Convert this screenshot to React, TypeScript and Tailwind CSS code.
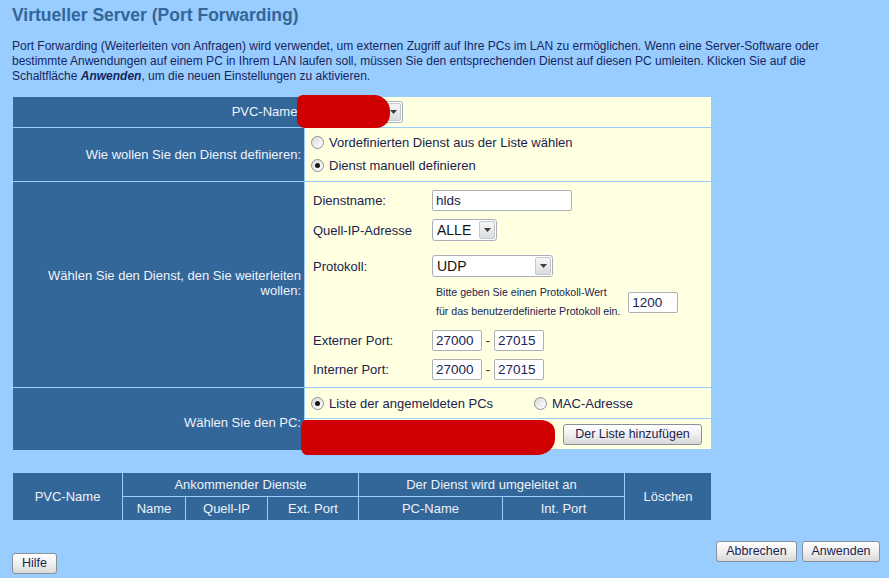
import React from "react";

const font = { fontFamily: '"Liberation Sans", Arial, sans-serif' };

function Radio({ checked }: { checked?: boolean }) {
  return (
    <span className="inline-flex h-[13px] w-[13px] shrink-0 items-center justify-center rounded-full border border-[#8e8f8f] bg-gradient-to-br from-[#dcdcdc] to-white">
      {checked && <span className="h-[5px] w-[5px] rounded-full bg-[#1a1a1a]" />}
    </span>
  );
}

function Select({ value, width }: { value: string; width: string }) {
  return (
    <div className={`flex h-[22px] items-stretch rounded-[3px] border border-[#a9afb8] bg-white ${width}`}>
      <span className="flex flex-1 items-center pl-[4px] text-[14px] text-[#111]">{value}</span>
      <span className="m-px flex w-[16px] items-center justify-center rounded-[2px] border border-[#c4c8cc] bg-gradient-to-b from-[#f6f6f6] to-[#d9dcdf]">
        <svg width="7" height="4" viewBox="0 0 7 4">
          <path d="M0 0h7L3.5 4z" fill="#3b3b3b" />
        </svg>
      </span>
    </div>
  );
}

function Input({ value, width }: { value: string; width: string }) {
  return (
    <div className={`flex h-[21px] items-center rounded-[2px] border border-[#abb0b6] bg-white pl-[3px] text-[13.5px] text-[#1a2450] ${width}`}>
      {value}
    </div>
  );
}

function Button({ children, width }: { children: React.ReactNode; width: string }) {
  return (
    <button className={`flex h-[21px] items-center justify-center rounded-[3px] border border-[#8a9099] bg-gradient-to-b from-white via-[#f0f0f0] to-[#d8d8d8] text-[12.5px] text-[#1a2450] ${width}`}>
      {children}
    </button>
  );
}

export default function App() {
  const left = "flex items-center justify-end bg-[#336699] pr-[3px] text-[13px] text-[#eef3fa]";
  const right = "bg-[#ffffe1] text-[13px] leading-[15px] text-[#1a2450]";
  const head = "flex items-center justify-center bg-[#336699] text-[13px] text-[#eef3fa]";

  return (
    <div style={font} className="min-h-[578px] w-[889px] bg-[#99ccff] px-[12px] pt-[4px]">
      <h1 className="text-[17.5px] font-bold leading-[22px] text-[#336699]">Virtueller Server (Port Forwarding)</h1>

      <p className="mt-[13px] whitespace-nowrap text-[12px] leading-[15px] text-[#15265e]">
        Port Forwarding (Weiterleiten von Anfragen) wird verwendet, um externen Zugriff auf Ihre PCs im LAN zu ermöglichen. Wenn eine Server-Software oder
        <br />
        bestimmte Anwendungen auf einem PC in Ihrem LAN laufen soll, müssen Sie den entsprechenden Dienst auf diesen PC umleiten. Klicken Sie auf die
        <br />
        Schaltfläche <b><i>Anwenden</i></b>, um die neuen Einstellungen zu aktivieren.
      </p>

      <div className="relative ml-px mt-[13px] grid w-[698px] grid-cols-[291px_406px] grid-rows-[30px_53px_205px_62px] gap-px">
        {/* Row 1 */}
        <div className={left}>PVC-Name:</div>
        <div className={`${right} flex items-center pl-[3px]`}>
          <Select value="" width="w-[95px]" />
        </div>
        <div className="absolute left-[284px] top-[-2px] h-[33px] w-[93px] rounded-[6px_16px_14px_8px] bg-[#d00000] blur-[0.7px]" />

        {/* Row 2 */}
        <div className={left}>Wie wollen Sie den Dienst definieren:</div>
        <div className={`${right} flex flex-col justify-center gap-[8px] pb-[2px] pl-[6px]`}>
          <label className="flex items-center gap-[5px]">
            <Radio />
            Vordefinierten Dienst aus der Liste wählen
          </label>
          <label className="flex items-center gap-[5px]">
            <Radio checked />
            Dienst manuell definieren
          </label>
        </div>

        {/* Row 3 */}
        <div className={`${left} pb-[3px] text-right leading-[15px]`}>
          Wählen Sie den Dienst, den Sie weiterleiten
          <br />
          wollen:
        </div>
        <div className={`${right} flex flex-col pl-[8px] pt-[8px]`}>
          <div className="flex items-center">
            <span className="w-[119px]">Dienstname:</span>
            <Input value="hlds" width="w-[140px]" />
          </div>
          <div className="mt-[8px] flex items-center">
            <span className="w-[119px]">Quell-IP-Adresse</span>
            <Select value="ALLE" width="w-[65px]" />
          </div>
          <div className="mt-[14px] flex items-center">
            <span className="w-[119px]">Protokoll:</span>
            <Select value="UDP" width="w-[121px]" />
          </div>
          <div className="mt-[6px] flex items-center">
            <span className="w-[123px]" />
            <div className="text-[10.6px] leading-[19px]">
              Bitte geben Sie einen Protokoll-Wert
              <br />
              für das benutzerdefinierte Protokoll ein.
            </div>
            <span className="ml-[8px]">
              <Input value="1200" width="w-[50px]" />
            </span>
          </div>
          <div className="mt-[9px] flex items-center">
            <span className="w-[119px]">Externer Port:</span>
            <Input value="27000" width="w-[50px]" />
            <span className="w-[12px] text-center">-</span>
            <Input value="27015" width="w-[50px]" />
          </div>
          <div className="mt-[8px] flex items-center">
            <span className="w-[119px]">Interner Port:</span>
            <Input value="27000" width="w-[50px]" />
            <span className="w-[12px] text-center">-</span>
            <Input value="27015" width="w-[50px]" />
          </div>
        </div>

        {/* Row 4 */}
        <div className={`${left} pt-[7px]`}>Wählen Sie den PC:</div>
        <div className="grid grid-rows-[30px_30px] gap-px">
          <div className={`${right} flex items-center pl-[6px]`}>
            <label className="flex w-[223px] items-center gap-[5px]">
              <Radio checked />
              Liste der angemeldeten PCs
            </label>
            <label className="flex items-center gap-[5px]">
              <Radio />
              MAC-Adresse
            </label>
          </div>
          <div className={`${right} flex items-center justify-end pr-[9px]`}>
            <Button width="w-[139px]">Der Liste hinzufügen</Button>
          </div>
        </div>
        <div className="absolute left-[288px] top-[323px] h-[35px] w-[254px] rounded-[4px_14px_18px_6px/10px_12px_16px_8px] bg-[#d00000] blur-[0.7px]" />
      </div>

      <div className="ml-px mt-[23px] grid w-[698px] grid-cols-[109px_62px_81px_90px_143px_121px_86px] grid-rows-[23px_23px] gap-px">
        <div className={`${head} row-span-2`}>PVC-Name</div>
        <div className={`${head} col-span-3`}>Ankommender Dienste</div>
        <div className={`${head} col-span-2`}>Der Dienst wird umgeleitet an</div>
        <div className={`${head} row-span-2`}>Löschen</div>
        <div className={head}>Name</div>
        <div className={head}>Quell-IP</div>
        <div className={head}>Ext. Port</div>
        <div className={head}>PC-Name</div>
        <div className={head}>Int. Port</div>
      </div>

      <div className="mr-[-3px] mt-[21px] flex items-start justify-between">
        <div className="mt-[12px]">
          <Button width="w-[45px]">Hilfe</Button>
        </div>
        <div className="flex gap-[5px]">
          <Button width="w-[81px]">Abbrechen</Button>
          <Button width="w-[78px]">Anwenden</Button>
        </div>
      </div>
    </div>
  );
}
